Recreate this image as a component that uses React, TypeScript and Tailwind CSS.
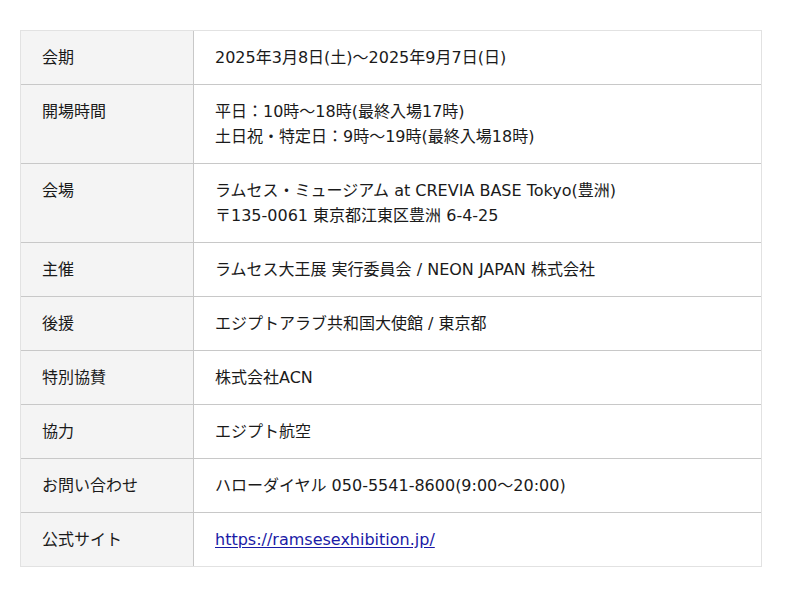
const rows: { label: string; lines: React.ReactNode[] }[] = [
  { label: "会期", lines: ["2025年3月8日(土)〜2025年9月7日(日)"] },
  {
    label: "開場時間",
    lines: ["平日：10時〜18時(最終入場17時)", "土日祝・特定日：9時〜19時(最終入場18時)"],
  },
  {
    label: "会場",
    lines: ["ラムセス・ミュージアム at CREVIA BASE Tokyo(豊洲)", "〒135-0061 東京都江東区豊洲 6-4-25"],
  },
  { label: "主催", lines: ["ラムセス大王展 実行委員会 / NEON JAPAN 株式会社"] },
  { label: "後援", lines: ["エジプトアラブ共和国大使館 / 東京都"] },
  { label: "特別協賛", lines: ["株式会社ACN"] },
  { label: "協力", lines: ["エジプト航空"] },
  { label: "お問い合わせ", lines: ["ハローダイヤル 050-5541-8600(9:00〜20:00)"] },
  {
    label: "公式サイト",
    lines: [
      <a key="url" href="#" className="text-[#1a1aa6] underline underline-offset-2">
        https://ramsesexhibition.jp/
      </a>,
    ],
  },
];

export default function App() {
  return (
    <div
      className="min-h-[597px] bg-white pt-[30px] pl-[20px] text-[16px] leading-[25px] text-[#1a1a1a]"
      style={{ fontFamily: '"DejaVu Sans", "Noto Sans CJK JP", sans-serif' }}
    >
      <div className="w-[742px] border border-[#e2e2e2]">
        {rows.map((r, i) => (
          <div
            key={r.label}
            className={`grid grid-cols-[173px_1fr] ${i > 0 ? "border-t border-[#c8c8c8]" : ""}`}
          >
            <div className="border-r border-[#c8c8c8] bg-[#f4f4f4] px-[21px] py-[14px]">{r.label}</div>
            <div className="px-[21px] py-[14px]">
              {r.lines.map((l, j) => (
                <div key={j}>{l}</div>
              ))}
            </div>
          </div>
        ))}
      </div>
    </div>
  );
}
